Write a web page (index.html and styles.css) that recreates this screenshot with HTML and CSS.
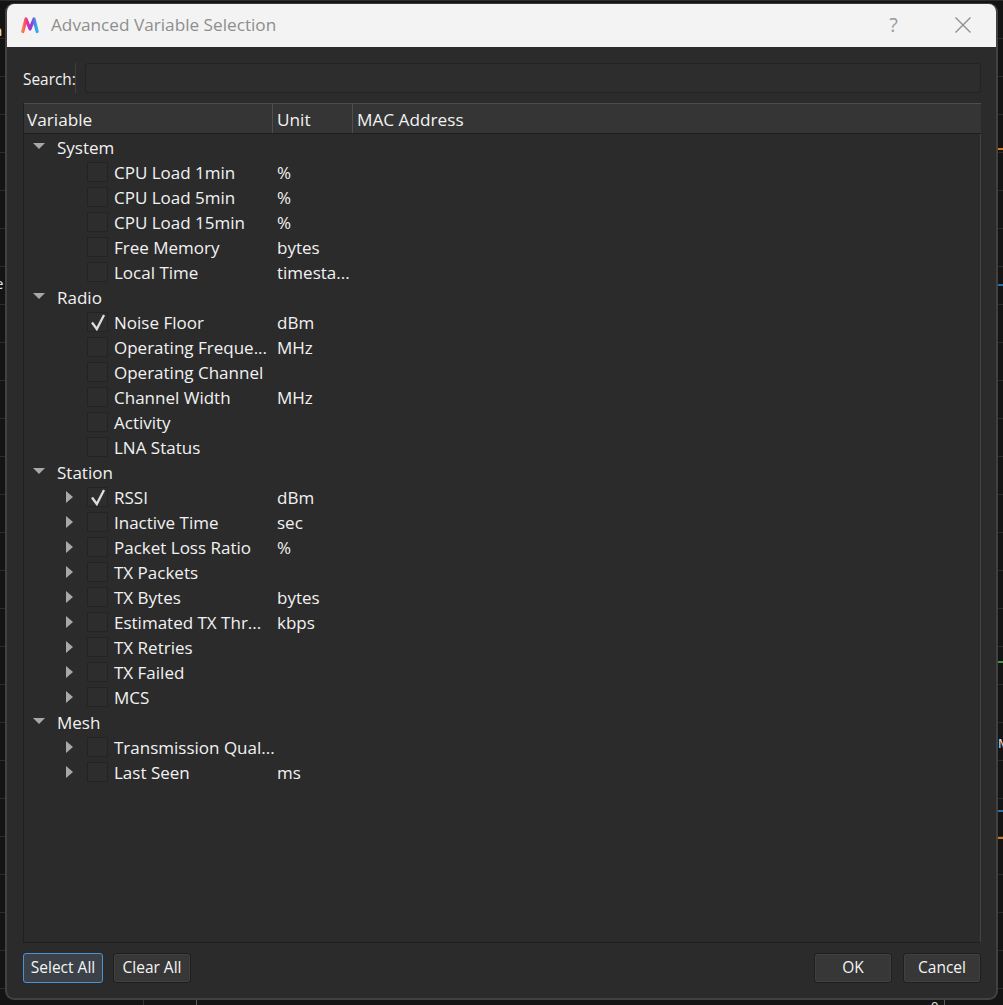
FILE: index.html
```html
<!DOCTYPE html>
<html lang="en">
<head>
<meta charset="utf-8">
<title>Advanced Variable Selection</title>
<link rel="stylesheet" href="styles.css">
</head>
<body>
<div class="backdrop" aria-hidden="true">
  <span class="mark mark-orange m1"></span>
  <span class="mark mark-blue m2"></span>
  <span class="mark mark-green m3"></span>
  <span class="mark mark-blue m4"></span>
  <span class="mark mark-orange m5"></span>
  <span class="peek p1">a</span>
  <span class="peek p2">e</span>
  <span class="peek p3">M</span>
  <span class="peek p4">0</span>
  <span class="tick t0"></span>
  <span class="tick t1"></span>
  <span class="tick t2"></span>
</div>
<main class="dialog">
  <header class="titlebar">
    <svg class="logo" viewBox="0 0 20 18" width="20" height="18">
      <defs>
        <linearGradient id="mgrad" x1="0" y1="0" x2="1" y2="0">
          <stop offset="0" stop-color="#ff7a45"/>
          <stop offset="0.3" stop-color="#ee2d92"/>
          <stop offset="0.6" stop-color="#8a3de0"/>
          <stop offset="1" stop-color="#2bb6e8"/>
        </linearGradient>
      </defs>
      <path d="M2.8 15.5 L6 3 L10 13 L14 3 L17.2 15.5" fill="none" stroke="url(#mgrad)" stroke-width="3.2" stroke-linejoin="round" stroke-linecap="round"/>
    </svg>
    <span class="title">Advanced Variable Selection</span>
    <span class="help">?</span>
    <svg class="close" viewBox="0 0 16 16" width="16" height="16"><path d="M.5 .5 L15.5 15.5 M15.5 .5 L.5 15.5" stroke="#8f8f8f" stroke-width="1.4" fill="none"/></svg>
  </header>
  <div class="body">
    <div class="search">
      <label class="search-label">Search:</label>
      <div class="search-input"></div>
    </div>
    <section class="tree">
      <div class="head">
        <div class="hcell hvar">Variable</div>
        <div class="hcell hunit">Unit</div>
        <div class="hcell hmac">MAC Address</div>
      </div>
      <div class="rows">
        <div class="row group"><span class="arrow down"></span><span class="name">System</span></div>
        <div class="row"><span class="box"></span><span class="name">CPU Load 1min</span><span class="unit">%</span></div>
        <div class="row"><span class="box"></span><span class="name">CPU Load 5min</span><span class="unit">%</span></div>
        <div class="row"><span class="box"></span><span class="name">CPU Load 15min</span><span class="unit">%</span></div>
        <div class="row"><span class="box"></span><span class="name">Free Memory</span><span class="unit">bytes</span></div>
        <div class="row"><span class="box"></span><span class="name">Local Time</span><span class="unit">timesta...</span></div>
        <div class="row group"><span class="arrow down"></span><span class="name">Radio</span></div>
        <div class="row"><span class="box"><svg class="check" viewBox="0 0 16 16" width="16" height="16"><path d="M2 8.5 L6.8 15 L14 1" fill="none" stroke="#dedede" stroke-width="2.3"/></svg></span><span class="name">Noise Floor</span><span class="unit">dBm</span></div>
        <div class="row"><span class="box"></span><span class="name">Operating Freque...</span><span class="unit">MHz</span></div>
        <div class="row"><span class="box"></span><span class="name">Operating Channel</span></div>
        <div class="row"><span class="box"></span><span class="name">Channel Width</span><span class="unit">MHz</span></div>
        <div class="row"><span class="box"></span><span class="name">Activity</span></div>
        <div class="row"><span class="box"></span><span class="name">LNA Status</span></div>
        <div class="row group"><span class="arrow down"></span><span class="name">Station</span></div>
        <div class="row"><span class="arrow right"></span><span class="box"><svg class="check" viewBox="0 0 16 16" width="16" height="16"><path d="M2 8.5 L6.8 15 L14 1" fill="none" stroke="#dedede" stroke-width="2.3"/></svg></span><span class="name">RSSI</span><span class="unit">dBm</span></div>
        <div class="row"><span class="arrow right"></span><span class="box"></span><span class="name">Inactive Time</span><span class="unit">sec</span></div>
        <div class="row"><span class="arrow right"></span><span class="box"></span><span class="name">Packet Loss Ratio</span><span class="unit">%</span></div>
        <div class="row"><span class="arrow right"></span><span class="box"></span><span class="name">TX Packets</span></div>
        <div class="row"><span class="arrow right"></span><span class="box"></span><span class="name">TX Bytes</span><span class="unit">bytes</span></div>
        <div class="row"><span class="arrow right"></span><span class="box"></span><span class="name">Estimated TX Thr...</span><span class="unit">kbps</span></div>
        <div class="row"><span class="arrow right"></span><span class="box"></span><span class="name">TX Retries</span></div>
        <div class="row"><span class="arrow right"></span><span class="box"></span><span class="name">TX Failed</span></div>
        <div class="row"><span class="arrow right"></span><span class="box"></span><span class="name">MCS</span></div>
        <div class="row group"><span class="arrow down"></span><span class="name">Mesh</span></div>
        <div class="row"><span class="arrow right"></span><span class="box"></span><span class="name">Transmission Qual...</span></div>
        <div class="row"><span class="arrow right"></span><span class="box"></span><span class="name">Last Seen</span><span class="unit">ms</span></div>
      </div>
    </section>
    <footer class="actions">
      <button class="btn btn-focus btn-select">Select All</button>
      <button class="btn btn-clear">Clear All</button>
      <span class="spacer"></span>
      <button class="btn btn-ok">OK</button>
      <button class="btn btn-cancel">Cancel</button>
    </footer>
  </div>
</main>
</body>
</html>
```
FILE: styles.css
```css
* { box-sizing: border-box; }
html, body { margin: 0; height: 100%; }
body {
  width: 1003px;
  height: 1005px;
  overflow: hidden;
  position: relative;
  background-color: #141414;
  background-image:
    linear-gradient(#2c2c2c 1px, transparent 1px);
  background-size: 100% 38px;
  font-family: "Open Sans", "Noto Sans", sans-serif;
  padding: 3px 5px 0;
}
.backdrop { position: absolute; inset: 0; }
.mark { position: absolute; left: 998px; width: 5px; height: 2px; }
.mark-orange { background: #d9761c; }
.mark-blue { background: #2a6ea6; }
.mark-green { background: #3f9a3f; }
.m1 { top: 148px; }
.m2 { top: 284px; }
.m3 { top: 661px; }
.m4 { top: 810px; }
.m5 { top: 837px; }
.peek { position: absolute; color: #e8e8e8; font-size: 15px; line-height: 16px; }
.p1 { left: -6px; top: 22px; }
.p2 { left: -5px; top: 275px; }
.p3 { left: 998px; top: 735px; font-size: 13px; }
.p4 { left: 931px; top: 998px; font-size: 13px; }
.tick { position: absolute; top: 998px; width: 1px; height: 7px; background: #5a5a5a; }
.t0 { left: 143px; background: #333; }
.t1 { left: 196px; }
.t2 { left: 944px; }

.dialog {
  position: relative;
  width: 993px;
  height: 997px;
  background: #2b2b2b;
  border: 2px solid #414141;
  border-top: 1px solid #3a3a3a;
  border-radius: 9px;
  overflow: hidden;
  display: flex;
  flex-direction: column;
  color: #f2f2f2;
}
.titlebar {
  flex: none;
  height: 43px;
  background: #f3f3f3;
  display: flex;
  align-items: center;
  padding-left: 13px;
}
.logo { flex: none; margin-top: -1px; }
.title { margin-left: 11px; color: #8e8e8e; font-size: 17.2px; margin-top: -3px; }
.help { margin-left: auto; color: #9a9a9a; font-size: 20px; margin-right: 57px; margin-top: -3px; }
.close { flex: none; margin-right: 25px; margin-top: -2px; }

.body {
  flex: 1;
  min-height: 0;
  display: flex;
  flex-direction: column;
  padding: 16px 15px 15px 16px;
}
.search { flex: none; display: flex; height: 30px; align-items: stretch; }
.search-label {
  width: 53px;
  font-size: 15.4px;
  line-height: 33px;
  border-right: 1px solid #3e3e3e;
  white-space: nowrap;
}
.search-input {
  flex: 1;
  margin-left: 9px;
  background: #2d2d2d;
  border: 1px solid #232323;
  border-radius: 3px;
}
.tree {
  flex: 1;
  min-height: 0;
  margin-top: 10px;
  border-left: 1px solid #1f1f1f;
  border-right: 1px solid #444;
  border-bottom: 1px solid #1f1f1f;
  display: flex;
  flex-direction: column;
}
.head {
  flex: none;
  height: 31px;
  display: flex;
  background: #353535;
  border-top: 1px solid #4c4c4c;
  border-bottom: 1px solid #1e1e1e;
  margin-right: -1px;
}
.hcell {
  font-size: 17.2px;
  line-height: 31px;
  padding-left: 3px;
  border-right: 1px solid #4e4e4e;
}
.hvar { width: 249px; }
.hunit { width: 80px; padding-left: 4px; }
.hmac { flex: 1; padding-left: 4px; border-right: 0; }
.rows { padding-top: 1px; }
.row {
  height: 25px;
  font-size: 17px;
  line-height: 25px;
  display: grid;
  grid-template-columns: 63px 27px 163px 1fr;
  align-items: center;
}
.row .arrow { grid-column: 1; justify-self: start; }
.row .box { grid-column: 2; }
.row .name { grid-column: 3; white-space: nowrap; }
.row .unit { grid-column: 4; white-space: nowrap; }
.row.group { grid-template-columns: 33px 1fr; }
.row.group .name { grid-column: 2; }
.arrow { display: block; width: 0; height: 0; }
.arrow.down {
  margin-left: 9px;
  margin-top: -4px;
  border-left: 6px solid transparent;
  border-right: 6px solid transparent;
  border-top: 6px solid #a8a8a8;
}
.arrow.right {
  margin-left: 42px;
  margin-top: -1px;
  border-top: 6px solid transparent;
  border-bottom: 6px solid transparent;
  border-left: 7px solid #a8a8a8;
}
.box {
  display: flex;
  align-items: center;
  justify-content: center;
  width: 21px;
  height: 20px;
  margin-top: -1px;
  background: #2d2d2d;
  border: 1px solid #232323;
  border-radius: 1px;
}
.check { flex: none; overflow: visible; }
.actions { flex: none; display: flex; height: 30px; margin-top: 10px; gap: 10px; }
.spacer { flex: 1; }
.btn {
  font: inherit;
  font-size: 15.5px;
  line-height: 1;
  color: #f4f4f4;
  background: #373737;
  border: 1px solid #1f1f1f;
  border-radius: 3px;
  padding: 0;
  box-shadow: inset 0 0 0 1px #404040;
}
.btn-focus { background: #3a4149; border-color: #4f90cf; box-shadow: none; }
.btn-select { width: 80px; }
.btn-clear { width: 78px; }
.btn-ok { width: 78px; }
.btn-cancel { width: 78px; margin-left: 1px; }
```
